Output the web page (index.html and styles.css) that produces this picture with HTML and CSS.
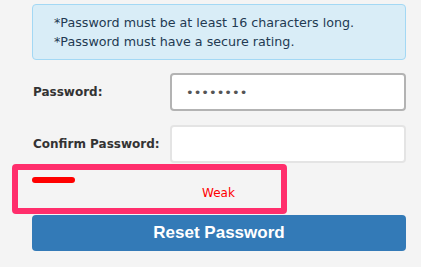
FILE: index.html
```html
<!DOCTYPE html>
<html lang="en">
<head>
<meta charset="utf-8">
<title>Reset Password</title>
<link rel="stylesheet" href="styles.css">
</head>
<body>
<form class="page">
  <div class="info">
    <p>*Password must be at least 16 characters long.</p>
    <p>*Password must have a secure rating.</p>
  </div>
  <div class="row first">
    <label class="label" for="pw">Password:</label>
    <input class="field focused" id="pw" type="password" value="password">
  </div>
  <div class="row second">
    <label class="label" for="cpw">Confirm Password:</label>
    <input class="field" id="cpw" type="password" value="">
  </div>
  <div class="strength">
    <div class="bar"></div>
    <div class="weak">Weak</div>
    <div class="highlight"></div>
  </div>
  <button class="submit" type="button">Reset Password</button>
</form>
</body>
</html>
```
FILE: styles.css
```css
html, body {
  margin: 0;
  padding: 0;
  background: #f4f4f4;
}
body {
  font-family: "DejaVu Sans", Verdana, sans-serif;
  font-size: 12px;
  color: #333;
}
.page {
  width: 374px;
  padding: 4px 0 0 32px;
}
.info {
  box-sizing: border-box;
  height: 56px;
  padding: 8px 0 8px 21px;
  background: #d9edf7;
  border: 1.5px solid #a3d8f4;
  border-radius: 4px;
  color: #233a52;
  font-size: 12.7px;
  line-height: 19px;
}
.info p {
  margin: 0;
}
.row {
  display: grid;
  grid-template-columns: 138px 236px;
  align-items: center;
}
.row.first {
  margin-top: 13px;
}
.row.second {
  margin-top: 14px;
}
.label {
  font-weight: bold;
  font-size: 12px;
  color: #333;
  padding-left: 1px;
}
.field {
  box-sizing: border-box;
  height: 38px;
  width: 236px;
  margin: 0;
  padding: 0 0 0 14px;
  background: #fff;
  border: 2px solid #e4e4e4;
  border-radius: 4px;
  font-family: "DejaVu Sans", sans-serif;
  font-size: 13px;
  color: #555;
  outline: none;
}
.field.focused {
  border-color: #b3b3b3;
}
.strength {
  position: relative;
  height: 51px;
  margin-top: 1px;
  display: grid;
  grid-template-columns: 170px 1fr;
  grid-template-rows: 19px 1fr;
}
.bar {
  grid-column: 1;
  grid-row: 1;
  align-self: end;
  width: 43px;
  height: 6px;
  border-radius: 3px;
  background: #ff0000;
}
.weak {
  grid-column: 2;
  grid-row: 2;
  padding-top: 2px;
  color: #ff0000;
  font-size: 12px;
  line-height: 16px;
}
.highlight {
  position: absolute;
  left: -20px;
  top: 0;
  width: 275px;
  height: 50px;
  box-sizing: border-box;
  border: 6px solid #ff2e6c;
  border-radius: 4px;
}
.submit {
  display: block;
  width: 374px;
  height: 36px;
  margin: 0;
  padding: 0;
  border: none;
  border-radius: 4px;
  background: #337ab7;
  color: #fff;
  font-family: "Liberation Sans", Arial, sans-serif;
  font-weight: bold;
  font-size: 17px;
}
```
